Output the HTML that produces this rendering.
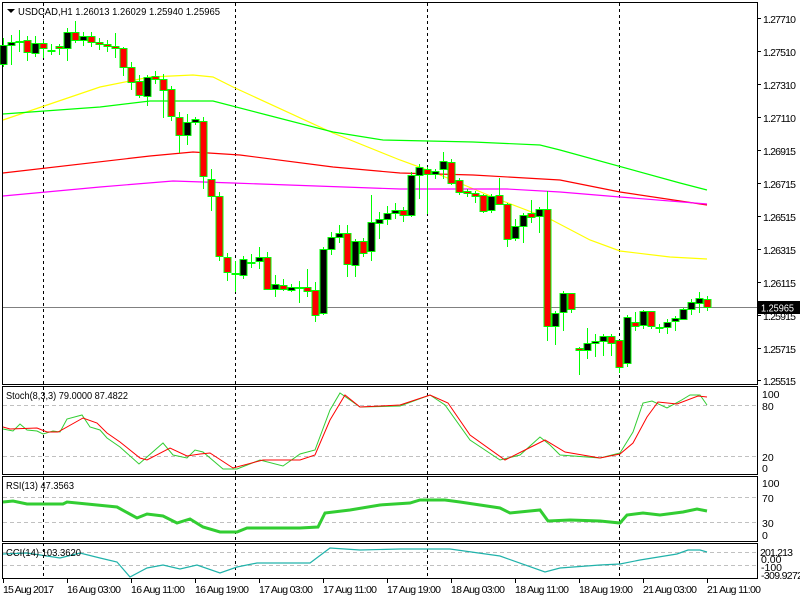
<!DOCTYPE html>
<html><head><meta charset="utf-8"><style>
html,body{margin:0;padding:0;background:#fff;}
svg{display:block;font-family:"Liberation Sans",sans-serif;font-size:11px;}
</style></head><body>
<svg width="800" height="600" viewBox="0 0 800 600" xmlns="http://www.w3.org/2000/svg">
<rect width="800" height="600" fill="#fff"/>
<g fill="none" stroke="#000" stroke-width="1">
<rect x="2.5" y="2.5" width="755" height="382"/>
<rect x="2.5" y="386.5" width="755" height="88"/>
<rect x="2.5" y="476.5" width="755" height="65"/>
<rect x="2.5" y="543.5" width="755" height="35"/>
</g>
<g stroke="#c0c0c0" stroke-dasharray="4,3" stroke-width="1">
<line x1="3" y1="405.5" x2="757" y2="405.5"/><line x1="3" y1="456.5" x2="757" y2="456.5"/>
<line x1="3" y1="497.5" x2="757" y2="497.5"/><line x1="3" y1="522.5" x2="757" y2="522.5"/>
<line x1="3" y1="552.5" x2="757" y2="552.5"/><line x1="3" y1="565.5" x2="757" y2="565.5"/>
</g>
<g stroke="#000" stroke-dasharray="3,3" stroke-width="1">
<line x1="43.5" y1="3" x2="43.5" y2="578"/><line x1="235.5" y1="3" x2="235.5" y2="578"/>
<line x1="427.5" y1="3" x2="427.5" y2="578"/><line x1="619.5" y1="3" x2="619.5" y2="578"/>
</g>
<line x1="3" y1="307.5" x2="757" y2="307.5" stroke="#808080"/>
<g fill="none" stroke-width="1.2">
<polyline stroke="#ffff00" points="3,120 100,87 150,77 193,75 213,77 233,87 333,133 400,160 433,172 500,200 550,219 590,240 620,251 670,257 707,259"/>
<polyline stroke="#00ff00" points="3,114 100,107 150,101 213,101 267,115 333,132 383,140 473,142 540,145 560,150 680,183 707,190"/>
<polyline stroke="#ff0000" points="3,173 150,156 193,152 240,155 333,167 400,173 473,175 560,180 620,192 707,205"/>
<polyline stroke="#ff00ff" points="3,196 100,187 173,181 233,183 400,189 507,189 560,192 620,197 707,204"/>
</g>
<g stroke="#00ff00" stroke-width="1">
<line x1="3.5" y1="38" x2="3.5" y2="67"/><rect x="0" y="45.5" width="7" height="19" fill="#000"/>
<line x1="11.5" y1="35" x2="11.5" y2="65"/><rect x="8" y="42.5" width="7" height="3" fill="#000"/>
<line x1="19.5" y1="30" x2="19.5" y2="52"/><rect x="16" y="41.5" width="7" height="1" fill="#000"/>
<line x1="27.5" y1="36" x2="27.5" y2="61"/><rect x="24" y="40.5" width="7" height="12" fill="#f00"/>
<line x1="35.5" y1="36" x2="35.5" y2="57"/><rect x="32" y="43.5" width="7" height="10" fill="#000"/>
<line x1="43.5" y1="40" x2="43.5" y2="58"/><rect x="40" y="43.5" width="7" height="5" fill="#f00"/>
<line x1="51.5" y1="44" x2="51.5" y2="55"/><rect x="48" y="50.5" width="7" height="1" fill="#000"/>
<line x1="59.5" y1="44" x2="59.5" y2="55"/><rect x="56" y="46.5" width="7" height="2" fill="#f00"/>
<line x1="67.5" y1="28" x2="67.5" y2="61"/><rect x="64" y="32.5" width="7" height="16" fill="#000"/>
<line x1="75.5" y1="21" x2="75.5" y2="43"/><rect x="72" y="32.5" width="7" height="8" fill="#f00"/>
<line x1="83.5" y1="32" x2="83.5" y2="46"/><rect x="80" y="36.5" width="7" height="4" fill="#000"/>
<line x1="91.5" y1="32" x2="91.5" y2="47"/><rect x="88" y="36.5" width="7" height="6" fill="#f00"/>
<line x1="99.5" y1="38" x2="99.5" y2="50"/><rect x="96" y="42.5" width="7" height="2" fill="#f00"/>
<line x1="107.5" y1="40" x2="107.5" y2="52"/><rect x="104" y="44.5" width="7" height="2" fill="#f00"/>
<line x1="115.5" y1="33" x2="115.5" y2="58"/><rect x="112" y="46.5" width="7" height="2" fill="#f00"/>
<line x1="123.5" y1="47" x2="123.5" y2="76"/><rect x="120" y="48.5" width="7" height="19" fill="#f00"/>
<line x1="131.5" y1="62" x2="131.5" y2="90"/><rect x="128" y="67.5" width="7" height="15" fill="#f00"/>
<line x1="139.5" y1="75" x2="139.5" y2="98"/><rect x="136" y="81.5" width="7" height="14" fill="#f00"/>
<line x1="147.5" y1="75" x2="147.5" y2="106"/><rect x="144" y="77.5" width="7" height="19" fill="#000"/>
<line x1="155.5" y1="71" x2="155.5" y2="84"/><rect x="152" y="76.5" width="7" height="3" fill="#f00"/>
<line x1="163.5" y1="74" x2="163.5" y2="118"/><rect x="160" y="79.5" width="7" height="11" fill="#f00"/>
<line x1="171.5" y1="86" x2="171.5" y2="121"/><rect x="168" y="89.5" width="7" height="27" fill="#f00"/>
<line x1="179.5" y1="112" x2="179.5" y2="153"/><rect x="176" y="117.5" width="7" height="18" fill="#f00"/>
<line x1="187.5" y1="114" x2="187.5" y2="145"/><rect x="184" y="122.5" width="7" height="13" fill="#000"/>
<line x1="195.5" y1="117" x2="195.5" y2="125"/><rect x="192" y="119.5" width="7" height="3" fill="#000"/>
<line x1="203.5" y1="117" x2="203.5" y2="189"/><rect x="200" y="121.5" width="7" height="55" fill="#f00"/>
<line x1="211.5" y1="169" x2="211.5" y2="211"/><rect x="208" y="179.5" width="7" height="17" fill="#f00"/>
<line x1="219.5" y1="192" x2="219.5" y2="261"/><rect x="216" y="196.5" width="7" height="60" fill="#f00"/>
<line x1="227.5" y1="253" x2="227.5" y2="281"/><rect x="224" y="257.5" width="7" height="15" fill="#f00"/>
<line x1="235.5" y1="261" x2="235.5" y2="292"/><rect x="232" y="273.5" width="7" height="1" fill="#000"/>
<line x1="243.5" y1="256" x2="243.5" y2="279"/><rect x="240" y="259.5" width="7" height="16" fill="#000"/>
<line x1="251.5" y1="254" x2="251.5" y2="268"/><rect x="248" y="262.5" width="7" height="1" fill="#000"/>
<line x1="259.5" y1="247" x2="259.5" y2="269"/><rect x="256" y="257.5" width="7" height="4" fill="#000"/>
<line x1="267.5" y1="252" x2="267.5" y2="290"/><rect x="264" y="257.5" width="7" height="32" fill="#f00"/>
<line x1="275.5" y1="275" x2="275.5" y2="297"/><rect x="272" y="284.5" width="7" height="5" fill="#000"/>
<line x1="283.5" y1="279" x2="283.5" y2="291"/><rect x="280" y="285.5" width="7" height="4" fill="#f00"/>
<line x1="291.5" y1="284" x2="291.5" y2="292"/><rect x="288" y="287.5" width="7" height="3" fill="#000"/>
<line x1="299.5" y1="281" x2="299.5" y2="303"/><rect x="296" y="287.5" width="7" height="1" fill="#000"/>
<line x1="307.5" y1="269" x2="307.5" y2="297"/><rect x="304" y="287.5" width="7" height="4" fill="#f00"/>
<line x1="315.5" y1="282" x2="315.5" y2="322"/><rect x="312" y="290.5" width="7" height="25" fill="#f00"/>
<line x1="323.5" y1="247" x2="323.5" y2="315"/><rect x="320" y="249.5" width="7" height="64" fill="#000"/>
<line x1="331.5" y1="232" x2="331.5" y2="255"/><rect x="328" y="237.5" width="7" height="12" fill="#000"/>
<line x1="339.5" y1="225" x2="339.5" y2="243"/><rect x="336" y="233.5" width="7" height="4" fill="#000"/>
<line x1="347.5" y1="225" x2="347.5" y2="277"/><rect x="344" y="233.5" width="7" height="31" fill="#f00"/>
<line x1="355.5" y1="239" x2="355.5" y2="277"/><rect x="352" y="241.5" width="7" height="24" fill="#000"/>
<line x1="363.5" y1="238" x2="363.5" y2="257"/><rect x="360" y="241.5" width="7" height="12" fill="#f00"/>
<line x1="371.5" y1="195" x2="371.5" y2="261"/><rect x="368" y="222.5" width="7" height="29" fill="#000"/>
<line x1="379.5" y1="212" x2="379.5" y2="239"/><rect x="376" y="219.5" width="7" height="4" fill="#000"/>
<line x1="387.5" y1="206" x2="387.5" y2="225"/><rect x="384" y="213.5" width="7" height="6" fill="#000"/>
<line x1="395.5" y1="203" x2="395.5" y2="219"/><rect x="392" y="210.5" width="7" height="3" fill="#000"/>
<line x1="403.5" y1="207" x2="403.5" y2="222"/><rect x="400" y="210.5" width="7" height="5" fill="#f00"/>
<line x1="411.5" y1="172" x2="411.5" y2="217"/><rect x="408" y="175.5" width="7" height="40" fill="#000"/>
<line x1="419.5" y1="164" x2="419.5" y2="199"/><rect x="416" y="167.5" width="7" height="8" fill="#000"/>
<line x1="427.5" y1="167" x2="427.5" y2="214"/><rect x="424" y="169.5" width="7" height="5" fill="#f00"/>
<line x1="435.5" y1="169" x2="435.5" y2="179"/><rect x="432" y="171.5" width="7" height="3" fill="#000"/>
<line x1="443.5" y1="152" x2="443.5" y2="179"/><rect x="440" y="161.5" width="7" height="8" fill="#000"/>
<line x1="451.5" y1="159" x2="451.5" y2="185"/><rect x="448" y="162.5" width="7" height="21" fill="#f00"/>
<line x1="459.5" y1="178" x2="459.5" y2="195"/><rect x="456" y="180.5" width="7" height="12" fill="#f00"/>
<line x1="467.5" y1="189" x2="467.5" y2="197"/><rect x="464" y="191.5" width="7" height="2" fill="#f00"/>
<line x1="475.5" y1="191" x2="475.5" y2="203"/><rect x="472" y="193.5" width="7" height="3" fill="#f00"/>
<line x1="483.5" y1="194" x2="483.5" y2="213"/><rect x="480" y="195.5" width="7" height="16" fill="#f00"/>
<line x1="491.5" y1="194" x2="491.5" y2="213"/><rect x="488" y="196.5" width="7" height="14" fill="#000"/>
<line x1="499.5" y1="178" x2="499.5" y2="205"/><rect x="496" y="195.5" width="7" height="9" fill="#f00"/>
<line x1="507.5" y1="203" x2="507.5" y2="247"/><rect x="504" y="204.5" width="7" height="35" fill="#f00"/>
<line x1="515.5" y1="219" x2="515.5" y2="241"/><rect x="512" y="226.5" width="7" height="12" fill="#000"/>
<line x1="523.5" y1="213" x2="523.5" y2="243"/><rect x="520" y="215.5" width="7" height="11" fill="#000"/>
<line x1="531.5" y1="200" x2="531.5" y2="223"/><rect x="528" y="213.5" width="7" height="4" fill="#f00"/>
<line x1="539.5" y1="207" x2="539.5" y2="233"/><rect x="536" y="209.5" width="7" height="7" fill="#000"/>
<line x1="547.5" y1="191" x2="547.5" y2="341"/><rect x="544" y="209.5" width="7" height="117" fill="#f00"/>
<line x1="555.5" y1="311" x2="555.5" y2="345"/><rect x="552" y="313.5" width="7" height="13" fill="#000"/>
<line x1="563.5" y1="291" x2="563.5" y2="331"/><rect x="560" y="293.5" width="7" height="19" fill="#000"/>
<line x1="571.5" y1="293" x2="571.5" y2="313"/><rect x="568" y="293.5" width="7" height="16" fill="#f00"/>
<line x1="579.5" y1="347" x2="579.5" y2="375"/><rect x="576" y="348.5" width="7" height="2" fill="#f00"/>
<line x1="587.5" y1="328" x2="587.5" y2="359"/><rect x="584" y="343.5" width="7" height="7" fill="#000"/>
<line x1="595.5" y1="334" x2="595.5" y2="357"/><rect x="592" y="341.5" width="7" height="2" fill="#000"/>
<line x1="603.5" y1="334" x2="603.5" y2="356"/><rect x="600" y="336.5" width="7" height="5" fill="#000"/>
<line x1="611.5" y1="334" x2="611.5" y2="356"/><rect x="608" y="336.5" width="7" height="7" fill="#f00"/>
<line x1="619.5" y1="340" x2="619.5" y2="373"/><rect x="616" y="340.5" width="7" height="27" fill="#f00"/>
<line x1="627.5" y1="315" x2="627.5" y2="367"/><rect x="624" y="317.5" width="7" height="46" fill="#000"/>
<line x1="635.5" y1="312" x2="635.5" y2="331"/><rect x="632" y="322.5" width="7" height="4" fill="#f00"/>
<line x1="643.5" y1="310" x2="643.5" y2="329"/><rect x="640" y="311.5" width="7" height="14" fill="#000"/>
<line x1="651.5" y1="311" x2="651.5" y2="329"/><rect x="648" y="311.5" width="7" height="15" fill="#f00"/>
<line x1="659.5" y1="324" x2="659.5" y2="333"/><rect x="656" y="327.5" width="7" height="1" fill="#000"/>
<line x1="667.5" y1="319" x2="667.5" y2="334"/><rect x="664" y="322.5" width="7" height="5" fill="#000"/>
<line x1="675.5" y1="316" x2="675.5" y2="331"/><rect x="672" y="318.5" width="7" height="3" fill="#000"/>
<line x1="683.5" y1="308" x2="683.5" y2="320"/><rect x="680" y="309.5" width="7" height="10" fill="#000"/>
<line x1="691.5" y1="299" x2="691.5" y2="315"/><rect x="688" y="302.5" width="7" height="7" fill="#000"/>
<line x1="699.5" y1="292" x2="699.5" y2="313"/><rect x="696" y="298.5" width="7" height="5" fill="#000"/>
<line x1="707.5" y1="296" x2="707.5" y2="311"/><rect x="704" y="299.5" width="7" height="8" fill="#f00"/>
</g>
<g fill="none" stroke-width="1">
<polyline stroke="#32cd32" points="3,429 13,431 20,424 27,430 37,431 43,434 53,431 60,432 67,419 82,415 90,427 100,430 107,438 120,447 139,464 163,443 173,455 187,458 195,450 203,452 223,469 237,469 260,460 283,466 300,454 315,450 330,410 340,393 350,400 360,407 400,406 430,395 445,405 470,440 500,460 520,455 540,437 550,445 560,455 600,458 620,453 633,432 643,403 652,401 667,408 680,401 690,395 700,395 707,405"/>
<polyline stroke="#ff0000" points="3,427 10,429 37,428 47,432 58,432 83,418 97,423 107,433 120,442 140,458 147,460 170,448 187,456 200,454 210,453 233,468 263,460 300,460 315,455 330,420 345,395 360,407 380,406 400,405 430,395 448,403 470,435 505,460 525,450 545,440 565,452 600,458 620,454 633,443 647,417 658,402 677,404 698,396 707,397"/>
</g>
<polyline fill="none" stroke="#32cd32" stroke-width="3" points="3,502 13,501 27,504 63,504 67,502 87,504 117,507 137,518 147,514 163,516 177,523 190,519 203,527 220,532 237,532 247,528 300,528 318,527 325,513 350,510 380,505 410,503 420,500 445,500 460,502 500,508 510,513 540,510 548,521 570,520 600,521 620,523 627,515 643,513 660,515 683,512 697,509 707,511"/>
<polyline fill="none" stroke="#20b2aa" stroke-width="1.2" points="3,554 27,553 60,558 80,553 100,558 117,562 130,577 147,568 163,565 180,569 197,565 220,573 237,567 257,563 300,563 310,563 330,548 360,550 400,549 450,549 500,556 545,572 560,568 600,565 620,564 640,560 677,554 688,550 700,550 707,552"/>
<polygon points="7,9 15,9 11,13" fill="#000"/>
<g fill="#000" font-size="10.5">
<text x="18" y="15" textLength="202" lengthAdjust="spacingAndGlyphs">USDCAD,H1  1.26013 1.26029 1.25940 1.25965</text>
<text x="6" y="399" textLength="122" lengthAdjust="spacingAndGlyphs">Stoch(8,3,3) 79.0000 87.4822</text>
<text x="6" y="489" textLength="68" lengthAdjust="spacingAndGlyphs">RSI(13) 47.3563</text>
<text x="6" y="556" textLength="75" lengthAdjust="spacingAndGlyphs">CCI(14) 103.3620</text>
</g>
<g stroke="#000"><line x1="757" y1="18.5" x2="761" y2="18.5"/><line x1="757" y1="51.5" x2="761" y2="51.5"/><line x1="757" y1="84.5" x2="761" y2="84.5"/><line x1="757" y1="117.5" x2="761" y2="117.5"/><line x1="757" y1="150.5" x2="761" y2="150.5"/><line x1="757" y1="183.5" x2="761" y2="183.5"/><line x1="757" y1="216.5" x2="761" y2="216.5"/><line x1="757" y1="249.5" x2="761" y2="249.5"/><line x1="757" y1="282.5" x2="761" y2="282.5"/><line x1="757" y1="315.5" x2="761" y2="315.5"/><line x1="757" y1="348.5" x2="761" y2="348.5"/><line x1="757" y1="380.5" x2="761" y2="380.5"/></g>
<g fill="#000" font-size="10.5" lengthAdjust="spacingAndGlyphs">
<text x="763" y="23" textLength="33">1.27710</text><text x="763" y="56" textLength="33">1.27510</text><text x="763" y="89" textLength="33">1.27310</text><text x="763" y="122" textLength="33">1.27110</text><text x="763" y="155" textLength="33">1.26915</text><text x="763" y="188" textLength="33">1.26715</text><text x="763" y="221" textLength="33">1.26515</text><text x="763" y="254" textLength="33">1.26315</text><text x="763" y="287" textLength="33">1.26115</text><text x="763" y="320" textLength="33">1.25915</text><text x="763" y="353" textLength="33">1.25715</text><text x="763" y="385" textLength="33">1.25515</text>
<text x="762" y="398">100</text><text x="762" y="410">80</text><text x="762" y="461">20</text><text x="762" y="472">0</text>
<text x="762" y="487">100</text><text x="762" y="502">70</text><text x="762" y="527">30</text><text x="762" y="539">0</text>
<text x="760" y="556" textLength="33">201.213</text><text x="761" y="563">0.00</text><text x="761" y="571">-100</text><text x="761" y="579" textLength="42">-309.9272</text>
</g>
<rect x="758" y="301" width="42" height="13" fill="#000"/>
<text x="761" y="311.5" fill="#fff" font-size="10.5" textLength="33" lengthAdjust="spacingAndGlyphs">1.25965</text>
<g stroke="#000"><line x1="3.5" y1="579" x2="3.5" y2="583"/><line x1="67.5" y1="579" x2="67.5" y2="583"/><line x1="131.5" y1="579" x2="131.5" y2="583"/><line x1="195.5" y1="579" x2="195.5" y2="583"/><line x1="259.5" y1="579" x2="259.5" y2="583"/><line x1="323.5" y1="579" x2="323.5" y2="583"/><line x1="387.5" y1="579" x2="387.5" y2="583"/><line x1="451.5" y1="579" x2="451.5" y2="583"/><line x1="515.5" y1="579" x2="515.5" y2="583"/><line x1="579.5" y1="579" x2="579.5" y2="583"/><line x1="643.5" y1="579" x2="643.5" y2="583"/><line x1="707.5" y1="579" x2="707.5" y2="583"/></g>
<g fill="#000" font-size="10.5" lengthAdjust="spacingAndGlyphs">
<text x="3" y="593" textLength="51">15 Aug 2017</text><text x="67" y="593" textLength="54">16 Aug 03:00</text><text x="131" y="593" textLength="54">16 Aug 11:00</text><text x="195" y="593" textLength="54">16 Aug 19:00</text><text x="259" y="593" textLength="54">17 Aug 03:00</text><text x="323" y="593" textLength="54">17 Aug 11:00</text><text x="387" y="593" textLength="54">17 Aug 19:00</text><text x="451" y="593" textLength="54">18 Aug 03:00</text><text x="515" y="593" textLength="54">18 Aug 11:00</text><text x="579" y="593" textLength="54">18 Aug 19:00</text><text x="643" y="593" textLength="54">21 Aug 03:00</text><text x="707" y="593" textLength="54">21 Aug 11:00</text>
</g>
</svg>
</body></html>
